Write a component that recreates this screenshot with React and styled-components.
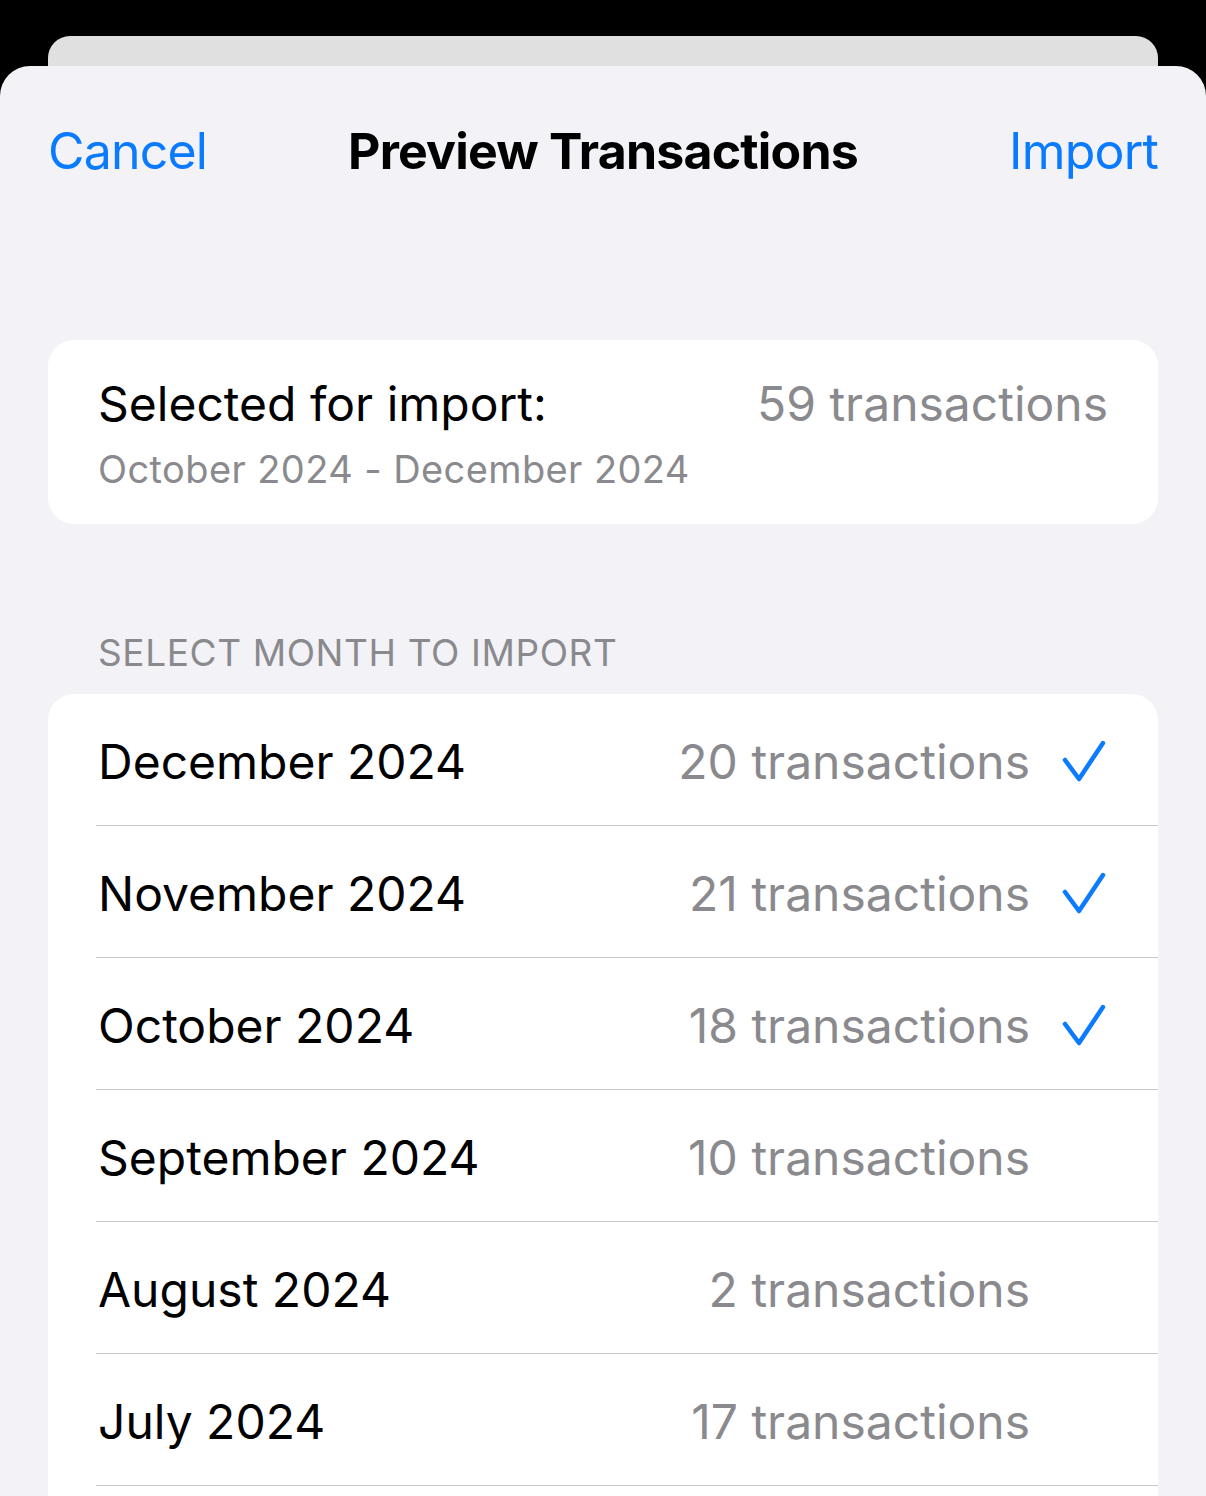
import {createGlobalStyle, styled} from "styled-components";

const GlobalStyle = createGlobalStyle`
  html, body {
    margin: 0;
    padding: 0;
    background: #000;
  }
  body {
    font-family: Inter, "Liberation Sans", sans-serif;
    -webkit-font-smoothing: antialiased;
  }
`

const Screen = styled.div`
  width: 1206px;
  height: 1496px;
  overflow: hidden;
  background: #000;
  padding-top: 36px;
  box-sizing: border-box;
`

const BackSheet = styled.div`
  margin: 0 48px;
  height: 30px;
  background: #e0e0e0;
  border-radius: 22px 22px 0 0;
`

const Sheet = styled.div`
  background: #f2f2f7;
  border-radius: 30px 30px 0 0;
  height: 1460px;
  padding: 0 48px;
  box-sizing: border-box;
`

const NavBar = styled.div`
  display: grid;
  grid-template-columns: 1fr auto 1fr;
  align-items: center;
  height: 170px;
  padding-bottom: 2px;
`

const NavButton = styled.button`
  border: 0;
  background: none;
  padding: 0;
  font-family: inherit;
  font-size: 50px;
  letter-spacing: -0.8px;
  color: #0a7aff;
  justify-self: ${({$align}) => $align};
`

const Title = styled.h1`
  margin: 0;
  font-size: 50px;
  font-weight: 700;
  letter-spacing: -0.8px;
  color: #000;
`

const Card = styled.div`
  background: #fff;
  border-radius: 26px;
  margin-top: ${({$top}) => $top}px;
`

const Summary = styled(Card)`
  padding: 32px 50px 32px;
  display: grid;
  grid-template-columns: 1fr auto;
  row-gap: 10px;
`

const MonthList = styled(Card)`
  padding-bottom: 60px;
`

const Primary = styled.span`
  font-size: 48px;
  letter-spacing: 0;
  color: #000;
  line-height: 64px;
`

const Secondary = styled.span`
  font-size: 48px;
  letter-spacing: 0;
  color: #8a8a8e;
  line-height: 64px;
`

const Range = styled.span`
  grid-column: 1 / -1;
  font-size: 38px;
  letter-spacing: 0.4px;
  color: #8a8a8e;
  line-height: 46px;
`

const SectionHeader = styled.div`
  margin: 106px 0 0 50px;
  font-size: 37px;
  letter-spacing: 0.6px;
  color: #8a8a8e;
  line-height: 46px;
`

const MonthRow = styled.div`
  display: flex;
  align-items: center;
  height: 131px;
  box-sizing: content-box;
  margin-left: 48px;
  padding-right: 52px;
  border-bottom: 1px solid #c6c6c8;
  & > * {
    position: relative;
    top: 2px;
  }
`

const MonthName = styled(Primary)`
  flex: 1;
  padding-left: 2px;
`

const CheckSlot = styled.span`
  width: 46px;
  height: 46px;
  margin-left: 30px;
  display: flex;
  align-items: center;
  justify-content: center;
`

const months = [
  {name: "December 2024", count: 20, selected: true},
  {name: "November 2024", count: 21, selected: true},
  {name: "October 2024", count: 18, selected: true},
  {name: "September 2024", count: 10, selected: false},
  {name: "August 2024", count: 2, selected: false},
  {name: "July 2024", count: 17, selected: false},
]

const Check = () => (
  <svg width="46" height="46" viewBox="0 0 46 46">
    <path d="M5 21 L19 40 L43 4" fill="none" stroke="#0a7aff" strokeWidth="4.5"
          strokeLinecap="round" strokeLinejoin="round"/>
  </svg>
)

export default function App() {
  return (
      <Screen>
        <GlobalStyle/>
        <BackSheet/>
        <Sheet>
          <NavBar>
            <NavButton $align="start">Cancel</NavButton>
            <Title>Preview Transactions</Title>
            <NavButton $align="end">Import</NavButton>
          </NavBar>

          <Summary $top={102}>
            <Primary>Selected for import:</Primary>
            <Secondary>59 transactions</Secondary>
            <Range>October 2024 - December 2024</Range>
          </Summary>

          <SectionHeader>SELECT MONTH TO IMPORT</SectionHeader>

          <MonthList $top={18}>
            {months.map((m) => (
                <MonthRow key={m.name}>
                  <MonthName>{m.name}</MonthName>
                  <Secondary>{m.count} transactions</Secondary>
                  <CheckSlot>{m.selected && <Check/>}</CheckSlot>
                </MonthRow>
            ))}
          </MonthList>
        </Sheet>
      </Screen>
  )
}
